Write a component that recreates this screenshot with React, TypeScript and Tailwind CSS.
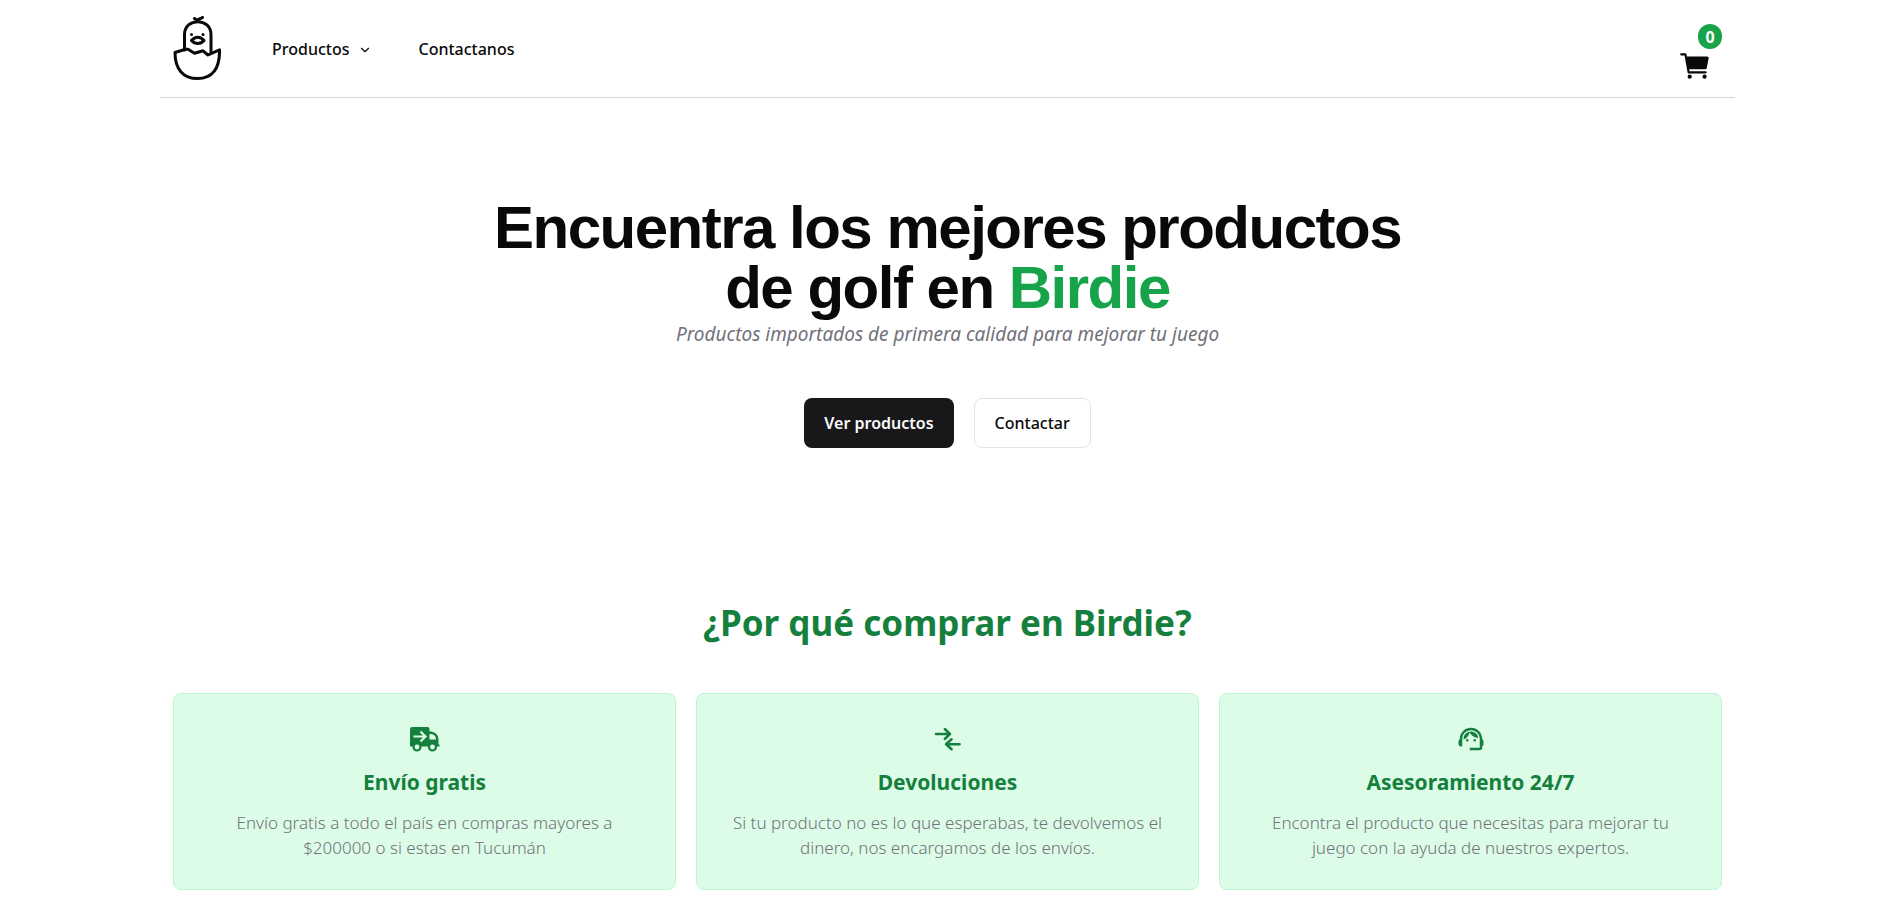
import type { ReactNode } from "react";
import { ChevronDown } from "lucide-react";
import { IoCart } from "react-icons/io5";
import { MdSupportAgent } from "react-icons/md";

function Logo() {
  return (
    <svg
      viewBox="0 0 48 66"
      className="h-[66px] w-[48px]"
      fill="none"
      stroke="currentColor"
      strokeWidth="3"
      strokeLinecap="round"
      strokeLinejoin="round"
      aria-hidden="true"
    >
      <path d="M11.500 34V18.500C11.500 1.500 38 1.500 38 18.500V37" />
      <path d="M24.500 4.500C25.500 3 27 3 29.500 1.500M24 4L21.500 2.500" />
      <path d="M18.500 24.500C22 20 27.500 20 31 24.500C27.500 28.500 22 28.500 18.500 24.500Z" />
      <path d="M18.500 18.500h.01M30 18.500h.01" />
      <path d="M2 36.500L12.500 33.200L15 33.200L21.500 37.200L30 34.800L35 39L46.500 33.800C47 53 39 62.500 24.500 62.500C10 62.500 2 53 2 36.500Z" />
    </svg>
  );
}

function TruckIcon() {
  return (
    <svg viewBox="0 0 30 30" className="size-[30px]" aria-hidden="true">
      <path
        fill="currentColor"
        d="M2 3H17.500A2 2 0 0 1 19.500 5V7.500H21A8 8 0 0 1 28.500 15V20.500H29.500V22.500H0V5A2 2 0 0 1 2 3Z"
      />
      <path fill="#dcfce7" d="M19.500 10H21A5 5 0 0 1 26 15.500H19.500Z" />
      <path fill="none" stroke="#dcfce7" strokeWidth="2.200" d="M3.500 12.500H15M10.500 7.500L15.500 12.500L10.500 17.500" />
      <circle cx="7" cy="23" r="3.500" fill="#dcfce7" stroke="currentColor" strokeWidth="2.200" />
      <circle cx="22.500" cy="23" r="3.500" fill="#dcfce7" stroke="currentColor" strokeWidth="2.200" />
    </svg>
  );
}

function ReturnIcon() {
  return (
    <svg
      viewBox="0 0 30 30"
      className="size-[30px]"
      fill="none"
      stroke="currentColor"
      strokeWidth="2.500"
      strokeLinecap="round"
      strokeLinejoin="round"
      aria-hidden="true"
    >
      <path d="M3 10H17M11.800 5L17 10L11.800 15M26.600 20.300H13M18.600 15.300L13 20.300L18.600 25.300" />
    </svg>
  );
}

function PerkCard({ icon, title, children }: { icon: ReactNode; title: string; children: ReactNode }) {
  return (
    <article className="flex flex-col items-center rounded-lg border border-[#bbf7d0] bg-[#dcfce7] px-[30px] pt-[30px] pb-[29px] text-center">
      <span className="text-[30px] text-[#15803d]">{icon}</span>
      <h3 className="mt-[11px] text-[21px] leading-[35px] font-bold text-[#15803d]">{title}</h3>
      <p className="mt-[10px] max-w-[440px] text-[17px] leading-[25px] font-light text-[#71717a]">{children}</p>
    </article>
  );
}

export default function App() {
  return (
    <div className="min-h-screen bg-white pl-[2px] font-['Noto_Sans','Open_Sans',sans-serif] text-[#09090b]">
      <div className="mx-auto max-w-[1575px]">
        <header className="flex h-[98px] items-center justify-between border-b border-[#d4d4d4] px-[13px]">
          <div className="flex items-center">
            <a href="#inicio" aria-label="Birdie">
              <Logo />
            </a>
            <nav className="ml-[51px] flex items-center gap-[46px] pt-[2px] text-[16px] leading-[25px] font-medium">
              <button type="button" className="flex items-center gap-[9px]">
                Productos
                <ChevronDown className="size-[14px]" strokeWidth={2} aria-hidden="true" />
              </button>
              <a href="#contacto">Contactanos</a>
            </nav>
          </div>
          <a href="#carrito" aria-label="Carrito" className="flex flex-col items-end pt-[10px]">
            <span className="flex h-[25px] w-[24px] items-center justify-center rounded-full bg-[#16a34a] text-[16px] font-bold text-white">
              0
            </span>
            <IoCart className="mr-[10px] size-[34px]" aria-hidden="true" />
          </a>
        </header>

        <main className="px-[13px]">
          <section className="flex flex-col items-center pt-[100px] text-center">
            <h1 className="max-w-[960px] font-['Liberation_Sans',Arial,sans-serif] text-[60px] leading-[60px] font-bold tracking-tight">
              Encuentra los mejores productos de golf en <span className="text-[#16a34a]">Birdie</span>
            </h1>
            <p className="text-[19px] leading-[33px] text-[#71717a] italic">
              Productos importados de primera calidad para mejorar tu juego
            </p>
            <div className="mt-[47px] flex gap-[20px] text-[16px] leading-[25px]">
              <a
                href="#productos"
                className="flex h-[50px] items-center rounded-lg bg-[#18181b] px-[20px] font-semibold text-[#fafafa]"
              >
                Ver productos
              </a>
              <a
                href="#contacto"
                className="flex h-[50px] items-center rounded-lg border border-[#e4e4e7] bg-white px-[20px] font-medium"
              >
                Contactar
              </a>
            </div>
          </section>

          <section className="pt-[150px] pb-[20px]">
            <h2 className="text-center text-[35px] leading-[50px] font-bold text-[#15803d]">
              ¿Por qué comprar en Birdie?
            </h2>
            <div className="mt-[45px] grid grid-cols-1 gap-[20px] lg:grid-cols-3">
              <PerkCard icon={<TruckIcon />} title="Envío gratis">
                Envío gratis a todo el país en compras mayores a $200000 o si estas en Tucumán
              </PerkCard>
              <PerkCard icon={<ReturnIcon />} title="Devoluciones">
                Si tu producto no es lo que esperabas, te devolvemos el dinero, nos encargamos de los envíos.
              </PerkCard>
              <PerkCard icon={<MdSupportAgent />} title="Asesoramiento 24/7">
                Encontra el producto que necesitas para mejorar tu juego con la ayuda de nuestros expertos.
              </PerkCard>
            </div>
          </section>
        </main>
      </div>
    </div>
  );
}
